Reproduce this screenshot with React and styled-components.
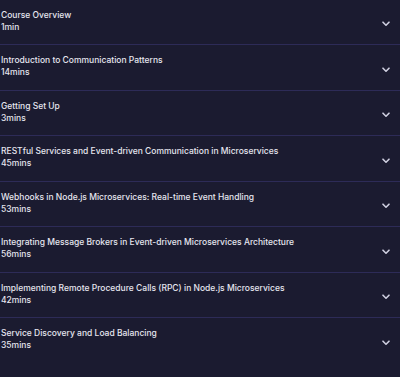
import React from "react";
import styled, { createGlobalStyle } from "styled-components";

const Global = createGlobalStyle`
  html, body { margin: 0; padding: 0; background: #1b1b30; }
  body { font-family: Inter, "Noto Sans", sans-serif; }
`;

const List = styled.div`
  display: flex;
  flex-direction: column;
  width: 400px;
  min-height: 377px;
  background: #1b1b30;
`;

const Row = styled.div`
  display: flex;
  align-items: center;
  justify-content: space-between;
  padding: 8.7px 10px 11.8px 1px;
  border-bottom: 1px solid ${(p) => (p.$last ? "transparent" : "#2d2b57")};
`;

const Info = styled.div`
  display: flex;
  flex-direction: column;
`;

const Title = styled.div`
  font-size: 8.5px;
  font-weight: 500;
  line-height: 12px;
  color: #e6e6ef;
  white-space: nowrap;
`;

const Duration = styled(Title)``;

const Chevron = styled.svg`
  width: 8px;
  height: 6px;
  margin-top: 7px;
  flex-shrink: 0;
`;

const lessons = [
  ["Course Overview", "1min"],
  ["Introduction to Communication Patterns", "14mins"],
  ["Getting Set Up", "3mins"],
  ["RESTful Services and Event-driven Communication in Microservices", "45mins"],
  ["Webhooks in Node.js Microservices: Real-time Event Handling", "53mins"],
  ["Integrating Message Brokers in Event-driven Microservices Architecture", "56mins"],
  ["Implementing Remote Procedure Calls (RPC) in Node.js Microservices", "42mins"],
  ["Service Discovery and Load Balancing", "35mins"],
];

export default function App() {
  return (
    <>
      <Global />
      <List>
        {lessons.map(([t, d], i) => (
          <Row key={t} $last={i === lessons.length - 1}>
            <Info>
              <Title>{t}</Title>
              <Duration>{d}</Duration>
            </Info>
            <Chevron viewBox="0 0 8 6">
              <polyline points="1,1.2 4,4.2 7,1.2" fill="none" stroke="#cfcfe0" strokeWidth="1.6" strokeLinecap="round" strokeLinejoin="round" />
            </Chevron>
          </Row>
        ))}
      </List>
    </>
  );
}
